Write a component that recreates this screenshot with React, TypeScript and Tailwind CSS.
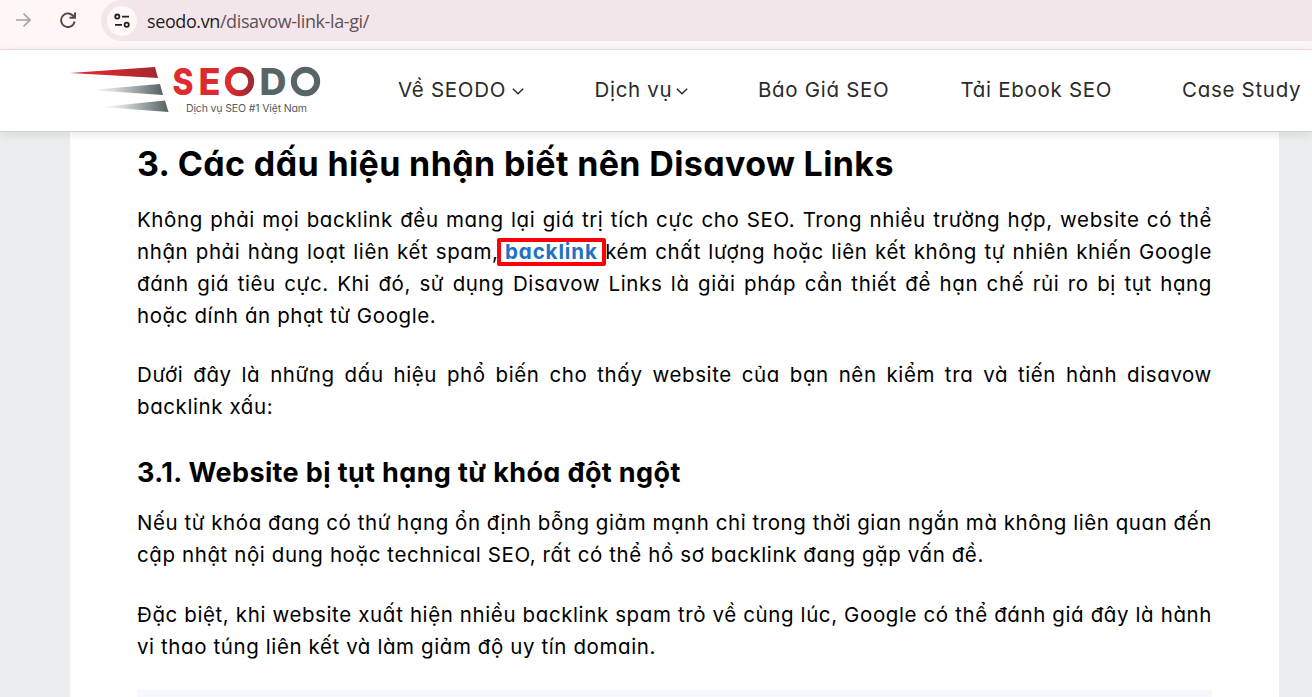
import { FC, ReactNode } from "react";

const navItems = [
  { label: "Về SEODO", menu: true, width: "w-[126px]" },
  { label: "Dịch vụ", menu: true, width: "w-[93px]" },
  { label: "Báo Giá SEO", menu: false, width: "w-[132px]" },
  { label: "Tải Ebook SEO", menu: false, width: "w-[151px]" },
  { label: "Case Study", menu: false, width: "w-[119px]" },
];

const BrowserBar: FC = () => (
  <div className="flex h-[50px] shrink-0 items-start border-b border-[#f3dfe0] bg-[#fff7f5]">
    <div className="flex h-[39px] w-[101px] shrink-0 items-center">
      <svg className="ml-[15px] h-4 w-4" viewBox="0 0 16 16" fill="none" stroke="#a99fa0" strokeWidth="1.7">
        <path d="M1 8h13.5M8.5 1.5 15 8l-6.5 6.5" />
      </svg>
      <svg className="ml-[29px] h-4 w-4" viewBox="0 0 16 16" fill="none" stroke="#5b4145" strokeWidth="1.9">
        <path d="M13.8 4.8A6.8 6.8 0 1 0 14.6 9.5" />
        <path d="M15 .5v5.3H9.5" />
      </svg>
    </div>
    <div className="flex h-[41px] flex-1 items-center rounded-bl-full rounded-tl-full bg-[#f2e6ea] pl-1.5">
      <div className="flex h-[30px] w-[30px] items-center justify-center rounded-full bg-[#fff8f7]">
        <svg className="h-4 w-4" viewBox="0 0 16 16" fill="none" stroke="#241f20" strokeWidth="1.8">
          <circle cx="3.3" cy="3.6" r="2.1" />
          <path d="M8 3.6h7M1 11.8h7" />
          <circle cx="12.7" cy="11.8" r="2.1" />
        </svg>
      </div>
      <span className="ml-2.5 font-['Open_Sans',sans-serif] text-[18px] leading-10 tracking-[-0.4px] whitespace-nowrap text-[#5f5156]">
        <span className="text-[#241c1f]">seodo.vn</span>/disavow-link-la-gi/
      </span>
    </div>
  </div>
);

const Logo: FC = () => (
  <svg className="ml-[70px] h-[53px] w-[252px] shrink-0 overflow-visible" viewBox="0 0 252 53">
    <defs>
      <linearGradient id="red">
        <stop offset="0" stopColor="#e52a2c" />
        <stop offset=".35" stopColor="#d9282c" />
        <stop offset="1" stopColor="#9e2b30" />
      </linearGradient>
      <linearGradient id="gray">
        <stop offset="0" stopColor="#fff" />
        <stop offset=".35" stopColor="#d2d7d8" />
        <stop offset="1" stopColor="#536062" />
      </linearGradient>
      <linearGradient id="ring">
        <stop offset="0" stopColor="#e22b2d" />
        <stop offset="1" stopColor="#9d2b30" />
      </linearGradient>
    </defs>
    <path d="M0 9 85 3l3 11Z" fill="url(#red)" />
    <path d="M20 26 90 20l3 11Z" fill="url(#gray)" />
    <path d="M31 43 95 36.5l3.5 11.5Z" fill="url(#gray)" />
    <g className="font-extrabold" fontSize="37">
      <text x="102.5" y="31" fill="#e12b2d" textLength="21" lengthAdjust="spacingAndGlyphs">S</text>
      <text x="128.5" y="31" fill="#dc2b2e" textLength="22" lengthAdjust="spacingAndGlyphs">E</text>
      <text x="189.5" y="31" fill="#586567" textLength="27" lengthAdjust="spacingAndGlyphs">D</text>
    </g>
    <circle cx="169.500" cy="17.5" r="11.7" fill="none" stroke="url(#ring)" strokeWidth="6" />
    <circle cx="235.5" cy="17.5" r="11.7" fill="none" stroke="#586567" strokeWidth="6" />
    <text x="116" y="47.5" fill="#555b5d" fontSize="10.5" textLength="121">
      Dịch vụ SEO #1 Việt Nam
    </text>
  </svg>
);

const Chevron: FC = () => (
  <svg className="mt-[4px] h-[7px] w-3" viewBox="0 0 12 7" fill="none" stroke="currentColor" strokeWidth="1.4">
    <path d="m.8.8 5.2 5 5.2-5" />
  </svg>
);

const Header: FC = () => (
  <header className="relative z-10 flex h-[82px] shrink-0 items-center border-b border-[#cfd2d2] bg-white shadow-[0_2px_10px_rgba(0,0,0,0.1)]">
    <Logo />
    <nav className="mb-[2px] ml-[76px] flex gap-[70.5px] text-[20.5px] leading-8 tracking-[0.7px] text-[#2b2b2b]">
      {navItems.map((item) => (
        <a
          key={item.label}
          className={`flex shrink-0 items-center justify-between whitespace-nowrap ${item.width}`}
        >
          {item.label}
          {item.menu && <Chevron />}
        </a>
      ))}
    </nav>
  </header>
);

const Paragraph: FC<{ lines: ReactNode[]; className: string }> = ({ lines, className }) => (
  <p className={`text-[20.5px] leading-8 tracking-[0.6px] ${className}`}>
    {lines.map((line, i) => (
      <span
        key={i}
        className={
          i < lines.length - 1
            ? "block whitespace-nowrap [text-align-last:justify] [word-spacing:-0.3px]"
            : "block whitespace-nowrap"
        }
      >
        {line}
      </span>
    ))}
  </p>
);

export default function App() {
  return (
    <div className="flex h-[697px] w-[1312px] flex-col overflow-hidden bg-[#ecedef] font-['Inter','Liberation_Sans',sans-serif] [font-feature-settings:'cv11']">
      <BrowserBar />
      <Header />
      <main className="ml-[70px] w-[1209px] flex-1 bg-white pl-[67px] text-black">
        <article className="w-[1075px]">
          <h2 className="pt-[10px] text-[34px] leading-[44px] font-bold tracking-[0.37px] whitespace-nowrap">
            3. Các dấu hiệu nhận biết nên Disavow Links
          </h2>
          <Paragraph
            className="mt-[18px]"
            lines={[
              "Không phải mọi backlink đều mang lại giá trị tích cực cho SEO. Trong nhiều trường hợp, website có thể",
              <>
                nhận phải hàng loạt liên kết spam,{" "}
                <a className="relative -ml-px font-bold tracking-[0.9px] text-[#2271c3]">
                  backlink
                  <span className="absolute -top-[1px] -left-[8px] h-[28px] w-[109px] rounded-xs border-4 border-[#fb0007]" />
                </a>{" "}
                kém chất lượng hoặc liên kết không tự nhiên khiến Google
              </>,
              "đánh giá tiêu cực. Khi đó, sử dụng Disavow Links là giải pháp cần thiết để hạn chế rủi ro bị tụt hạng",
              "hoặc dính án phạt từ Google.",
            ]}
          />
          <Paragraph
            className="mt-[27px]"
            lines={[
              "Dưới đây là những dấu hiệu phổ biến cho thấy website của bạn nên kiểm tra và tiến hành disavow",
              "backlink xấu:",
            ]}
          />
          <h3 className="mt-[31px] text-[27px] leading-[38px] font-bold tracking-[0.37px] whitespace-nowrap">
            3.1. Website bị tụt hạng từ khóa đột ngột
          </h3>
          <Paragraph
            className="mt-[15px]"
            lines={[
              "Nếu từ khóa đang có thứ hạng ổn định bỗng giảm mạnh chỉ trong thời gian ngắn mà không liên quan đến",
              "cập nhật nội dung hoặc technical SEO, rất có thể hồ sơ backlink đang gặp vấn đề.",
            ]}
          />
          <Paragraph
            className="mt-7"
            lines={[
              "Đặc biệt, khi website xuất hiện nhiều backlink spam trỏ về cùng lúc, Google có thể đánh giá đây là hành",
              "vi thao túng liên kết và làm giảm độ uy tín domain.",
            ]}
          />
          <div className="mt-[27px] h-8 bg-[#f7f8fd]" />
        </article>
      </main>
    </div>
  );
}
